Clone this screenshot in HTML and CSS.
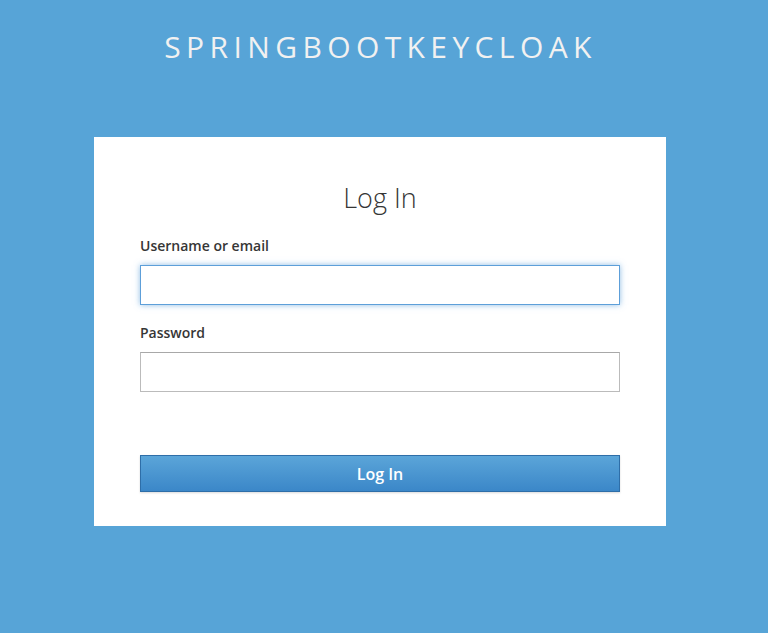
FILE: index.html
```html
<!DOCTYPE html>
<html lang="en">
<head>
<meta charset="utf-8">
<title>Log in to springbootkeycloak</title>
<link rel="stylesheet" href="styles.css">
</head>
<body>
<div class="page">
  <header class="header">SPRINGBOOTKEYCLOAK</header>
  <main class="card">
    <h1 class="title">Log In</h1>
    <form class="form">
      <div class="field">
        <label class="label" for="username">Username or email</label>
        <input class="input input-focus" id="username" type="text">
      </div>
      <div class="field">
        <label class="label" for="password">Password</label>
        <input class="input" id="password" type="password">
      </div>
      <button class="btn" type="button">Log In</button>
    </form>
  </main>
</div>
</body>
</html>
```
FILE: styles.css
```css
html, body {
  margin: 0;
  padding: 0;
  height: 100%;
}
body {
  background: #57a4d7;
  font-family: "Open Sans", "Noto Sans", sans-serif;
  color: #363636;
}
.page {
  padding-right: 8px;
  display: flex;
  flex-direction: column;
  align-items: center;
}
.header {
  padding-top: 29px;
  padding-left: 1px;
  font-size: 30px;
  line-height: 36px;
  letter-spacing: 5.4px;
  color: #f1f1f1;
  font-weight: 400;
  margin-bottom: 72px;
}
.card {
  width: 572px;
  box-sizing: border-box;
  background: #fff;
  padding: 46px 46px 34px;
}
.title {
  margin: 0 0 23px;
  text-align: center;
  font-size: 27px;
  line-height: 30px;
  font-weight: 300;
  color: #363636;
}
.form {
  display: flex;
  flex-direction: column;
}
.field {
  display: flex;
  flex-direction: column;
  margin-bottom: 18px;
}
.label {
  font-size: 14px;
  line-height: 20px;
  font-weight: 600;
  color: #363636;
  margin-bottom: 9px;
}
.input {
  height: 40px;
  box-sizing: border-box;
  border: 1px solid #bbb;
  border-top-color: #a8a8a8;
  background: #fff;
  padding: 0 8px;
  font-size: 14px;
  outline: none;
  margin: 0;
}
.input-focus {
  border-color: #5d9fd9;
  box-shadow: 0 0 6px rgba(98, 163, 219, 0.7);
}
.btn {
  margin-top: 45px;
  height: 37px;
  box-sizing: border-box;
  border: 1px solid #2e6ea8;
  background: linear-gradient(to bottom, #5ba5d9 0%, #3b87c8 100%);
  color: #fff;
  font-family: "Open Sans", "Noto Sans", sans-serif;
  font-size: 16px;
  font-weight: 600;
  box-shadow: 0 1px 2px rgba(0, 0, 0, 0.15);
  padding: 0;
  cursor: pointer;
}
```
